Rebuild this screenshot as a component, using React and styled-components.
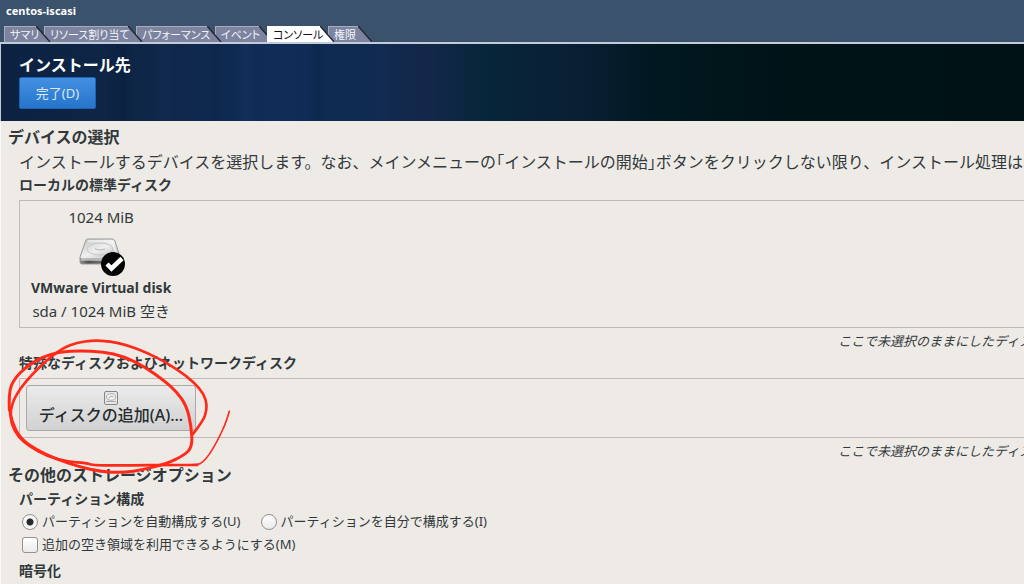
import React from "react";
import styled, { createGlobalStyle, css } from "styled-components";

const GlobalStyle = createGlobalStyle`
  * { box-sizing: border-box; }
  body {
    margin: 0;
    overflow: hidden;
    background: #eeebe7;
    color: #33393b;
    font-family: "Noto Sans", "Noto Sans CJK JP", sans-serif;
  }
  h1, h2, h3, p { margin: 0; }
`;

const Page = styled.div`
  position: relative;
  min-height: 100vh;
`;

const TopBar = styled.header`
  display: flex;
  flex-direction: column;
  justify-content: space-between;
  height: 44px;
  background: #3b526d;
  border-bottom: 2px solid #c3cbd8;
`;

const MachineName = styled.h1`
  padding: 3px 6px 0;
  color: #fff;
  font: bold 11px/16px "Noto Sans", sans-serif;
`;

const TabList = styled.nav`
  display: flex;
  padding-left: 4px;
`;

const TabButton = styled.button`
  position: relative;
  z-index: ${(p) => p.$level};
  display: flex;
  height: 16px;
  margin: 0 -7px 0 0;
  padding: 0;
  border: 0;
  background: none;
  color: ${(p) => (p.$active ? "#111" : "#f4f5fa")};
  font: 11px/16px "Noto Sans CJK JP", sans-serif;
  font-feature-settings: "palt";
  white-space: nowrap;
`;

const TabLabel = styled.span`
  position: relative;
  z-index: 1;
  width: ${(p) => p.$width}px;
  padding-left: 5px;
  text-align: left;
  background: ${(p) => (p.$active ? "#fff" : "#7c84a0")};
  border-left: 1px solid ${(p) => (p.$active ? "#fff" : "#a6adc2")};
  border-top: 1px solid ${(p) => (p.$active ? "#fff" : "#a6adc2")};
  line-height: 15px;
`;

const Banner = styled.section`
  display: flex;
  flex-direction: column;
  align-items: flex-start;
  height: 77px;
  padding: 9px 18px;
  border-left: 1px solid #c3cbd8;
  background:
    linear-gradient(90deg, transparent 10%, rgba(0, 8, 25, 0.12) 12%, transparent 13% 15%, rgba(50, 90, 150, 0.08) 16%, transparent 17% 20%, rgba(0, 8, 25, 0.1) 21%, transparent 22% 23%, rgba(40, 90, 160, 0.1) 24%, transparent 25% 30%, rgba(0, 8, 25, 0.12) 31%, transparent 32% 36%, rgba(20, 60, 130, 0.12) 37%, transparent 38%),
    linear-gradient(90deg, #0d2242 0%, #0e2647 15%, #102d59 27%, #0f2b50 35%, #13274a 42%, #07263b 47%, #0a1e33 57%, #001820 64%, #001519 72%, #001216 100%);
`;

const BannerTitle = styled.h2`
  color: #fff;
  font-size: 16px;
  font-weight: bold;
  line-height: 24px;
`;

const DoneButton = styled.button`
  width: 77px;
  height: 32px;
  padding: 0;
  border: 1px solid #1f63b4;
  border-radius: 2px;
  background: linear-gradient(#438fe2, #2675cb);
  color: #dce9f8;
  font: 13px/28px "Noto Sans", "Noto Sans CJK JP", sans-serif;
`;

const Content = styled.main`
  display: flex;
  flex-direction: column;
  padding: 3px 0 0 7px;
  border-left: 1px solid #fbfaf8;
`;

const SectionTitle = styled.h2`
  font-size: 16px;
  line-height: 26px;
  white-space: nowrap;
`;

const Group = styled.div`
  padding-left: 11px;
`;

const Intro = styled.p`
  font-size: 16px;
  line-height: 24px;
  white-space: nowrap;
`;

const Bracket = styled.span`
  font-feature-settings: "halt";
`;

const SubTitle = styled.h3`
  font-size: 14px;
  line-height: 22px;
  white-space: nowrap;
`;

const Tray = styled.div`
  display: flex;
  align-items: flex-start;
  margin-top: 4px;
  border: 1px solid #bdbbb8;
  border-right: 0;
  padding: ${(p) => (p.$compact ? "6px" : "4px 11px")};
  height: ${(p) => (p.$compact ? 60 : 128)}px;
`;

const Hint = styled.p`
  padding: 2px 0 0 calc(82% - 5px);
  font-size: 13px;
  font-style: italic;
  line-height: 22px;
  white-space: nowrap;
`;

const DiskCard = styled.div`
  display: flex;
  flex-direction: column;
  align-items: center;
  font-size: 15px;
  line-height: 24px;
  white-space: nowrap;
  svg { margin: 8px 0 0; }
`;

const DiskName = styled.strong`
  font-size: 14px;
  line-height: 22px;
`;

const AddDiskButton = styled.button`
  display: flex;
  flex-direction: column;
  align-items: center;
  width: 170px;
  height: 46px;
  padding: 5px 0 0;
  border: 1px solid #aaa8a6;
  border-radius: 3px;
  background: linear-gradient(#ebebec, #d2d1d2);
  color: #262b2d;
  font: 500 16px/21px "Noto Sans", "Noto Sans CJK JP", sans-serif;
  white-space: nowrap;
`;

const Options = styled.div`
  margin-bottom: 4px;
`;

const OptionRow = styled.div`
  display: flex;
  align-items: center;
  gap: 20px;
  padding-left: 3px;
  height: 23px;
`;

const Option = styled.label`
  display: flex;
  align-items: center;
  gap: 4px;
  font-size: 13px;
  line-height: 23px;
  white-space: nowrap;
`;

const control = css`
  appearance: none;
  flex: none;
  width: 16px;
  height: 16px;
  margin: 0;
  border: 1px solid #929190;
`;

const Radio = styled.input.attrs({ type: "radio" })`
  ${control}
  border-radius: 50%;
  background: linear-gradient(#fff, #ebeaea);
  &:checked {
    background: radial-gradient(circle, #252a2c 0 3px, #f6f6f6 4px);
  }
`;

const Checkbox = styled.input.attrs({ type: "checkbox" })`
  ${control}
  border-radius: 3px;
  background: linear-gradient(#fff, #ebeaea);
`;

const Marker = styled.svg`
  position: absolute;
  z-index: 10;
  left: 0;
  top: 330px;
  pointer-events: none;
`;

const tabs = [
  { label: "サマリ", width: 32 },
  { label: "リソース割り当て", width: 84 },
  { label: "パフォーマンス", width: 71 },
  { label: "イベント", width: 44 },
  { label: "コンソール", width: 53, active: true },
  { label: "権限", width: 30 },
];

function Tab({ label, width, active, level }) {
  const fill = active ? "#fff" : "#7c84a0";
  return (
    <TabButton $active={active} $level={level} aria-current={active ? "page" : undefined}>
      <TabLabel $width={width} $active={active}>{label}</TabLabel>
      <svg width="15" height="16" aria-hidden="true">
        <path d="M0 0L14 16H0Z" fill={fill} />
        <path d="M0 0L14 16" stroke="#20242e" strokeWidth="1.3" />
      </svg>
    </TabButton>
  );
}

function DiskIcon() {
  return (
    <svg width="48" height="40" viewBox="0 0 48 40" aria-hidden="true">
      <defs>
        <linearGradient id="diskTop" x1="0" y1="0" x2="1" y2="1">
          <stop offset="0" stopColor="#c4c4c4" />
          <stop offset="0.5" stopColor="#efefef" />
          <stop offset="1" stopColor="#b5b5b5" />
        </linearGradient>
        <linearGradient id="diskSide" x1="0" y1="0" x2="1" y2="0">
          <stop offset="0" stopColor="#8b8b8b" />
          <stop offset="0.2" stopColor="#4f514f" />
          <stop offset="1" stopColor="#a0a0a0" />
        </linearGradient>
      </defs>
      <path d="M3 21V25Q3 27 5 27H40Q43 27 43 25V21Z" fill="url(#diskSide)" stroke="#999" />
      <path d="M9 3Q10 2 12 2H35Q37 2 38 4L43 20Q43 22 40 22H6Q2 22 3 20Z" fill="url(#diskTop)" stroke="#999" />
      <path d="M11 4H35L40 19" fill="none" stroke="#fafafa" />
      <ellipse cx="23" cy="12" rx="13" ry="6" fill="none" stroke="#c6c6c6" />
      <path d="M18 12Q23 14 28 12" fill="none" stroke="#b4b4b4" />
      <path d="M4 23H25" stroke="#eee" />
      <circle cx="36" cy="27" r="12" fill="#050505" />
      <path d="M30 27L34.5 31.5L45 21.5" fill="none" stroke="#fff" strokeWidth="4.5" />
    </svg>
  );
}

function SmallDiskIcon() {
  return (
    <svg width="14" height="14" viewBox="0 0 14 14" aria-hidden="true">
      <rect x="0.5" y="0.5" width="13" height="13" rx="1.5" fill="#e6e6e6" stroke="#858585" />
      <ellipse cx="7" cy="6" rx="4.5" ry="3.2" fill="#f4f4f4" stroke="#adadad" />
      <path d="M4.5 7Q7 4 9.5 6M2 10.5H12" fill="none" stroke="#aaa" />
    </svg>
  );
}

const outerLoop = [
  [579, 312], [610, 272], [620, 240], [619, 210], [600, 175], [560, 138], [500, 98], [440, 68],
  [380, 45], [330, 34], [280, 31], [230, 38], [190, 53], [140, 90], [80, 150], [45, 200],
  [31, 240], [33, 280], [55, 322], [90, 350], [140, 378], [200, 395], [260, 399], [280, 406],
  [400, 406], [500, 405], [592, 405], [608, 397], [628, 374], [652, 333], [675, 285], [688, 244],
];

const innerLoop = [
  [28, 240], [26, 190], [40, 150], [80, 108], [130, 80], [180, 65], [240, 62], [310, 65],
  [370, 79], [430, 108], [490, 150], [530, 185], [560, 228], [574, 290], [577, 352], [550, 377],
  [500, 401], [430, 419], [370, 428], [300, 425], [240, 411], [170, 388], [110, 360], [60, 325],
  [35, 275], [28, 230],
];

function smoothPath(points) {
  let d = `M${points[0]}`;
  for (let i = 1; i < points.length - 1; i++) {
    const [x, y] = points[i];
    const [nx, ny] = points[i + 1];
    d += `Q${x} ${y} ${(x + nx) / 2} ${(y + ny) / 2}`;
  }
  return `${d}L${points[points.length - 1]}`;
}

export default function App() {
  return (
    <>
      <GlobalStyle />
      <Page>
        <TopBar>
          <MachineName>centos-iscasi</MachineName>
          <TabList>
            {tabs.map((tab, i) => (
              <Tab key={tab.label} {...tab} level={tab.active ? 9 : 8 - i} />
            ))}
          </TabList>
        </TopBar>
        <Banner>
          <BannerTitle>インストール先</BannerTitle>
          <DoneButton>完了(D)</DoneButton>
        </Banner>
        <Content>
          <SectionTitle>デバイスの選択</SectionTitle>
          <Group>
            <Intro>
              インストールするデバイスを選択します。なお、メインメニューの<Bracket>「</Bracket>インストールの開始<Bracket>」</Bracket>ボタンをクリックしない限り、インストール処理は開
            </Intro>
            <SubTitle>ローカルの標準ディスク</SubTitle>
            <Tray>
              <DiskCard>
                <span>1024 MiB</span>
                <DiskIcon />
                <DiskName>VMware Virtual disk</DiskName>
                <span>sda / 1024 MiB 空き</span>
              </DiskCard>
            </Tray>
            <Hint>ここで未選択のままにしたディス</Hint>
            <SubTitle>特殊なディスクおよびネットワークディスク</SubTitle>
            <Tray $compact>
              <AddDiskButton>
                <SmallDiskIcon />
                ディスクの追加(A)...
              </AddDiskButton>
            </Tray>
            <Hint>ここで未選択のままにしたディス</Hint>
          </Group>
          <SectionTitle>その他のストレージオプション</SectionTitle>
          <Group>
            <SubTitle>パーティション構成</SubTitle>
            <Options>
              <OptionRow>
                <Option>
                  <Radio name="partitioning" defaultChecked />
                  パーティションを自動構成する(U)
                </Option>
                <Option>
                  <Radio name="partitioning" />
                  パーティションを自分で構成する(I)
                </Option>
              </OptionRow>
              <OptionRow>
                <Option>
                  <Checkbox />
                  追加の空き領域を利用できるようにする(M)
                </Option>
              </OptionRow>
            </Options>
            <SubTitle id="encryption">暗号化</SubTitle>
            <OptionRow>
              <Checkbox aria-labelledby="encryption" />
            </OptionRow>
          </Group>
        </Content>
        <Marker width="240" height="150" viewBox="0 0 720 450" aria-hidden="true">
          <g fill="none" stroke="#ff2a1a" strokeLinecap="round" strokeLinejoin="round">
            <path d={smoothPath(outerLoop.slice(0, 27))} strokeWidth="8" />
            <path d={smoothPath(outerLoop.slice(25))} strokeWidth="5" />
            <path d={smoothPath(innerLoop)} strokeWidth="9" />
          </g>
        </Marker>
      </Page>
    </>
  );
}
